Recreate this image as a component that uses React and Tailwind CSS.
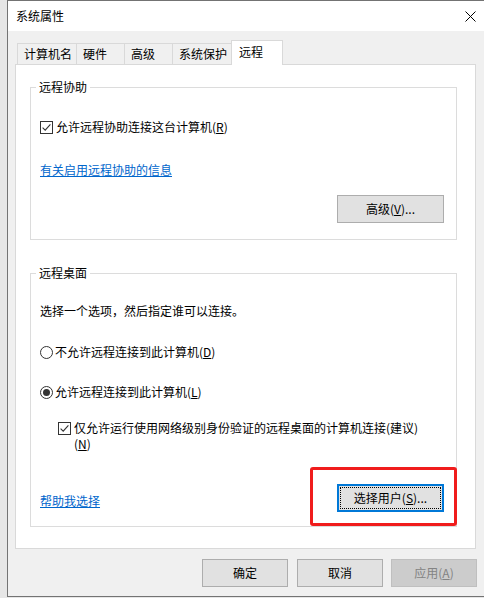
import React from 'react';

const CheckBox = ({ checked }) => (
  <svg width="13" height="13" viewBox="0 0 13 13" className="shrink-0">
    <rect x="0.5" y="0.5" width="12" height="12" fill="#fff" stroke="#333" />
    {checked && <path d="M2.6 6.6 L5.2 9.2 L10.4 3.4" fill="none" stroke="#333" strokeWidth="1.1" />}
  </svg>
);

const Radio = ({ checked }) => (
  <svg width="13" height="13" viewBox="0 0 13 13" className="shrink-0">
    <circle cx="6.5" cy="6.5" r="6" fill="#fff" stroke="#333" />
    {checked && <circle cx="6.5" cy="6.5" r="3.5" fill="#333" />}
  </svg>
);

const Button = ({ children, disabled, focused, className = '' }) => (
  <button
    className={
      'h-[28px] w-[86px] flex items-center justify-center text-[12px] leading-[16px] ' +
      (disabled
        ? 'bg-[#cccccc] border border-[#bfbfbf] text-[#838383] '
        : focused
        ? 'bg-[#e1e1e1] border-2 border-[#0078d7] text-black outline-1 outline-dotted outline-black outline-offset-[-4px] '
        : 'bg-[#e1e1e1] border border-[#adadad] text-black ') +
      className
    }
  >
    {children}
  </button>
);

const tabs = [
  { label: '计算机名', w: 'w-[60px]' },
  { label: '硬件', w: 'w-[49px]' },
  { label: '高级', w: 'w-[49px]' },
  { label: '系统保护', w: 'w-[60px]' },
];

export default function App() {
  return (
    <div className="flex h-[598px] w-[484px] bg-[#e6e6e6] font-['Noto_Sans_CJK_SC','Liberation_Sans',sans-serif] text-[12px] leading-[16px] text-black">
      <div className="w-[7px] shrink-0" />
      <div className="flex h-[597px] flex-1 flex-col border-l border-t border-b border-[#737373] bg-[#f0f0f0]">
        {/* Title bar */}
        <div className="flex h-[30px] items-center justify-between bg-white pl-[8px] pr-[8px]">
          <span>系统属性</span>
          <svg width="11" height="11" viewBox="0 0 11 11">
            <path d="M0.5 0.5 L10.5 10.5 M10.5 0.5 L0.5 10.5" stroke="#000" strokeWidth="1" />
          </svg>
        </div>

        <div className="flex flex-1 flex-col pl-[7px] pt-[9px]">
          {/* Tabs */}
          <div className="flex h-[24px] items-end pl-[2px]">
            {tabs.map((t, i) => (
              <div
                key={t.label}
                className={`${t.w} ${i > 0 ? '-ml-px' : ''} flex h-[21px] items-center border-l border-r border-t border-[#d9d9d9] bg-[#f0f0f0] pl-[6px]`}
              >
                {t.label}
              </div>
            ))}
            <div className="relative z-10 -mb-px -ml-px flex h-[25px] w-[52px] items-center border-l border-r border-t border-[#d9d9d9] bg-white pb-[2px] pl-[7px]">
              远程
            </div>
          </div>

          {/* Panel */}
          <div className="flex h-[485px] w-[461px] flex-col border border-[#d9d9d9] bg-white pl-[14px]">
            {/* 远程协助 */}
            <fieldset className="mt-[14px] flex w-[427px] flex-col border border-[#dcdcdc] pb-[16px] pl-[9px] pr-[12px]">
              <legend className="ml-[-4px] px-[3px] leading-[16px]">远程协助</legend>
              <div className="mt-[24px] flex items-center gap-[3px]">
                <CheckBox checked />
                <span>允许远程协助连接这台计算机(<u>R</u>)</span>
              </div>
              <a className="mt-[27px] self-start text-[#0066cc] underline">有关启用远程协助的信息</a>
              <Button className="mt-[17px] w-[107px] self-end">
                高级(<u>V</u>)...
              </Button>
            </fieldset>

            {/* 远程桌面 */}
            <fieldset className="mt-[25px] flex w-[427px] flex-col border border-[#dcdcdc] pb-[14px] pl-[9px] pr-[12px]">
              <legend className="ml-[-4px] px-[3px] leading-[16px]">远程桌面</legend>
              <div className="mt-[22px]">选择一个选项，然后指定谁可以连接。</div>
              <div className="mt-[25px] flex items-center gap-[2px]">
                <Radio />
                <span>不允许远程连接到此计算机(<u>D</u>)</span>
              </div>
              <div className="mt-[24px] flex items-center gap-[2px]">
                <Radio checked />
                <span>允许远程连接到此计算机(<u>L</u>)</span>
              </div>
              <div className="mt-[20px] flex items-start gap-[3px] pl-[18px]">
                <div className="pt-[2px]">
                  <CheckBox checked />
                </div>
                <span>
                  仅允许运行使用网络级别身份验证的远程桌面的计算机连接(建议)
                  <br />
                  (<u>N</u>)
                </span>
              </div>
              <div className="mt-[32px] flex items-center justify-between">
                <a className="mt-[5px] text-[#0066cc] underline">帮助我选择</a>
                <div className="relative">
                  <Button focused className="w-[107px]">
                    选择用户(<u>S</u>)...
                  </Button>
                  <div className="pointer-events-none absolute -bottom-[14px] -left-[27px] -right-[13px] -top-[17px] rounded-[3px] border-[3px] border-[#f01c1c]" />
                </div>
              </div>
            </fieldset>
          </div>

          {/* Footer */}
          <div className="mt-[10px] flex justify-end pr-[7px]">
            <Button>确定</Button>
            <Button className="ml-[9px]">取消</Button>
            <Button disabled className="ml-[8px]">
              应用(<u>A</u>)
            </Button>
          </div>
        </div>
      </div>
    </div>
  );
}
